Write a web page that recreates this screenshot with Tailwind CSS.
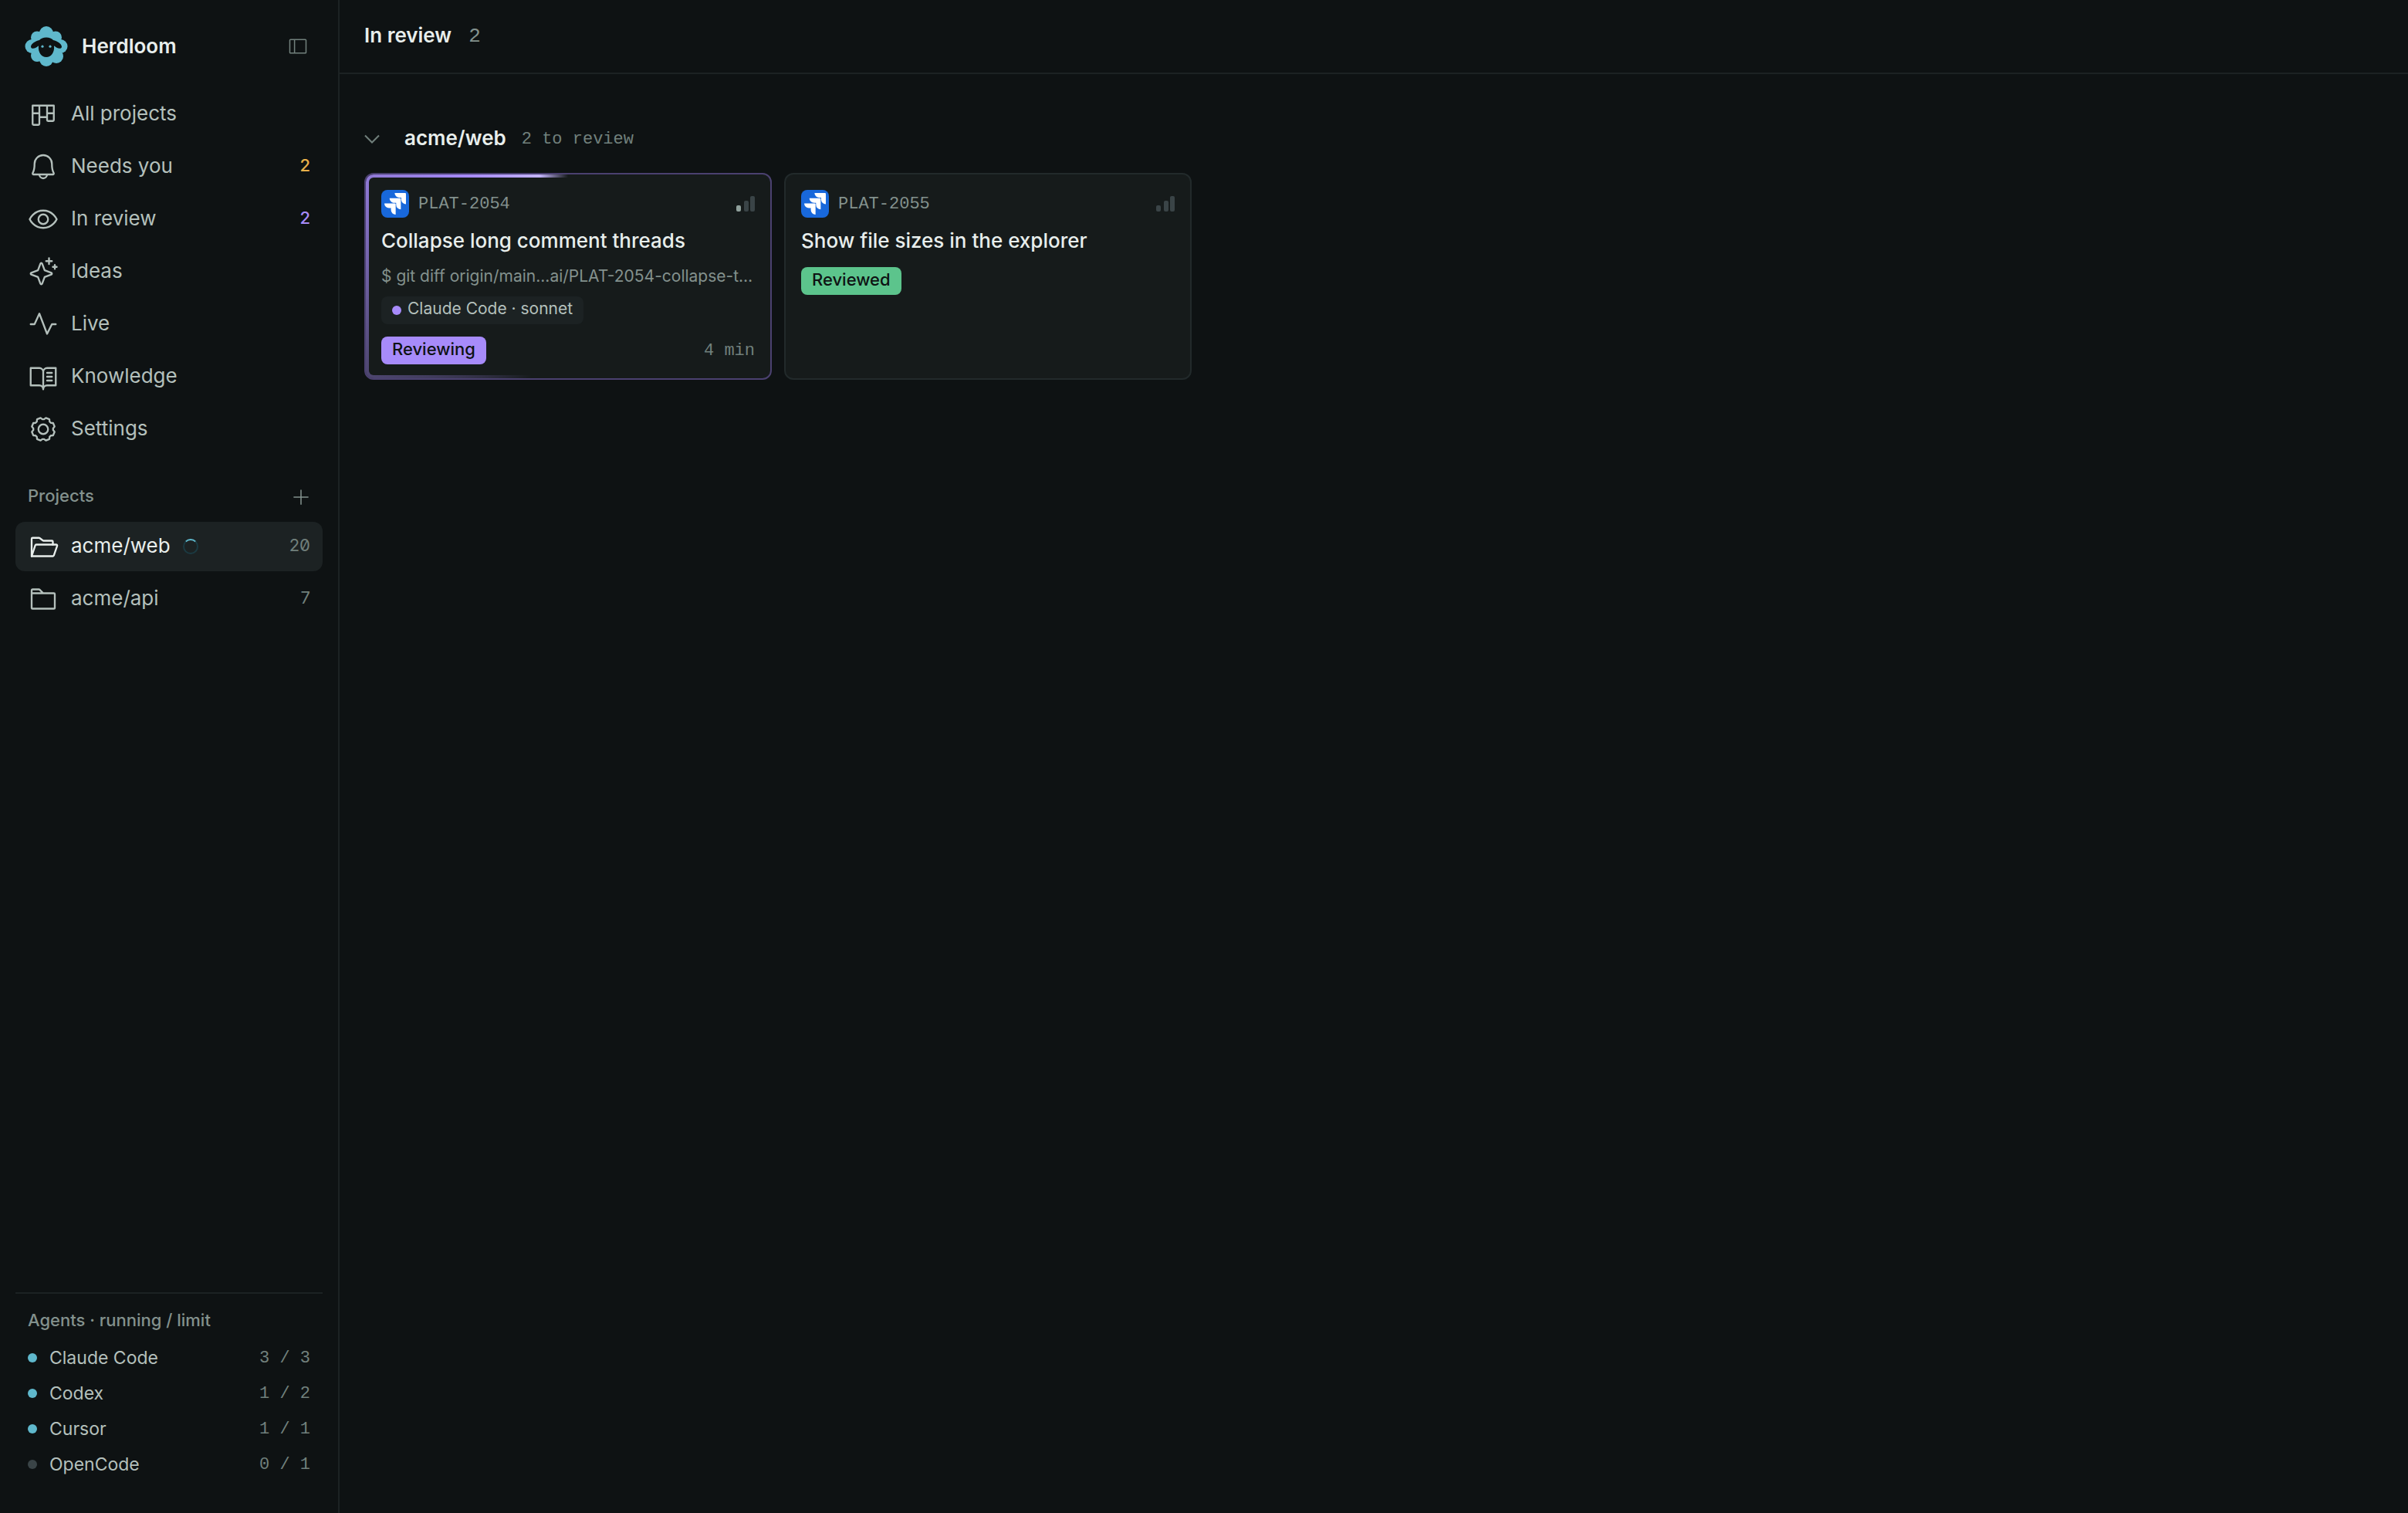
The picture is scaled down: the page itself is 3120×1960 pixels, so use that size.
<!DOCTYPE html>
<html lang="en">

<head>
    <meta charset="UTF-8">
    <meta name="viewport" content="width=device-width, initial-scale=1.0">
    <title>Herdloom</title>

    <script src="https://cdn.jsdelivr.net/npm/@tailwindcss/browser@4"></script>
</head>

<body class="flex min-h-screen bg-[#0e1213] font-['Inter',sans-serif] text-[26px] text-[#b4c0bc]">

<!-- Icon sprite -->
<svg class="hidden" xmlns="http://www.w3.org/2000/svg">
    <symbol id="kanban" viewBox="0 0 256 256">
        <path d="M40 56h176v120a8 8 0 0 1-8 8h-40a8 8 0 0 1-8-8V56M96 56v152a8 8 0 0 1-8 8H48a8 8 0 0 1-8-8V56M40 120h56M160 120h56M96 152h64"/>
    </symbol>
    <symbol id="bell" viewBox="0 0 256 256">
        <path d="M96 192a32 32 0 0 0 64 0M56 104a72 72 0 0 1 144 0c0 35.800 8.300 64.600 14.900 76a8 8 0 0 1-6.900 12H48a8 8 0 0 1-6.900-12C47.700 168.600 56 139.800 56 104Z"/>
    </symbol>
    <symbol id="eye" viewBox="0 0 256 256">
        <path d="M128 56C48 56 16 128 16 128s32 72 112 72 112-72 112-72-32-72-112-72Z"/>
        <circle cx="128" cy="128" r="40"/>
    </symbol>
    <symbol id="sparkle" viewBox="0 0 256 256">
        <path d="M84.270 171.730l-55.090-20.300a7.920 7.920 0 0 1 0-14.860l55.090-20.300 20.300-55.090a7.920 7.920 0 0 1 14.860 0l20.300 55.090 55.090 20.300a7.920 7.920 0 0 1 0 14.860l-55.090 20.300-20.300 55.090a7.920 7.920 0 0 1-14.860 0Z"/>
        <path d="M176 16v48M152 40h48M224 72v32M208 88h32"/>
    </symbol>
    <symbol id="pulse" viewBox="0 0 256 256">
        <path d="M24 128h32l40-88 64 168 40-80h32"/>
    </symbol>
    <symbol id="book" viewBox="0 0 256 256">
        <path d="M128 88a32 32 0 0 1 32-32h72v144h-72a32 32 0 0 0-32 32V88a32 32 0 0 0-32-32H24v144h72a32 32 0 0 1 32 32M160 96h40M160 128h40M160 160h40"/>
    </symbol>
    <symbol id="gear" viewBox="-128 -128 256 256">
        <circle r="40"/>
        <path d="M82 7 94 22 82 51 63 53 53 63 51 82 22 94 7 82H-7L-22 94-51 82-53 63-63 53-82 51-94 22-82 7V-7L-94-22-82-51-63-53-53-63-51-82-22-94-7-82H7L22-94 51-82 53-63 63-53 82-51 94-22 82-7Z"/>
    </symbol>
    <symbol id="folder-open" viewBox="0 0 256 256">
        <path d="M32 208V64a8 8 0 0 1 8-8h53.300a8 8 0 0 1 4.800 1.600l27.800 20.800a8 8 0 0 0 4.800 1.600H200a8 8 0 0 1 8 8v24"/>
        <path d="M32 208l30.200-90.500a8 8 0 0 1 7.600-5.500H236a8 8 0 0 1 7.600 10.500L216 202a8 8 0 0 1-8 6Z"/>
    </symbol>
    <symbol id="folder" viewBox="0 0 256 256">
        <path d="M128 80h88a8 8 0 0 1 8 8v113a7 7 0 0 1-7 7H39a7 7 0 0 1-7-7V80ZM32 80V56a8 8 0 0 1 8-8h52.700a8 8 0 0 1 5.600 2.300L128 80"/>
    </symbol>
    <symbol id="sidebar" viewBox="0 0 256 256">
        <path d="M40 48h176a8 8 0 0 1 8 8v144a8 8 0 0 1-8 8H40a8 8 0 0 1-8-8V56a8 8 0 0 1 8-8ZM88 48v160"/>
    </symbol>
    <symbol id="plus" viewBox="0 0 256 256">
        <path d="M40 128h176M128 40v176"/>
    </symbol>
    <symbol id="jira" viewBox="0 0 36 36">
        <rect width="36" height="36" rx="8" fill="#1868db"/>
        <path fill="#fff" transform="translate(4 4) scale(1.167)" d="M11.571 11.513H0a5.218 5.218 0 0 0 5.232 5.215h2.130v2.057A5.215 5.215 0 0 0 12.575 24V12.518a1.005 1.005 0 0 0-1.005-1.005zm5.723-5.756H5.736a5.215 5.215 0 0 0 5.215 5.214h2.129v2.058a5.218 5.218 0 0 0 5.215 5.214V6.758a1.001 1.001 0 0 0-1.001-1.001zM23.013 0H11.455a5.215 5.215 0 0 0 5.215 5.215h2.129v2.057A5.215 5.215 0 0 0 24 12.483V1.005A1.001 1.001 0 0 0 23.013 0Z"/>
    </symbol>
</svg>

<aside class="sticky top-0 flex h-screen w-[440px] shrink-0 flex-col border-r-2 border-[#1c2223] px-5 pb-10">
    <div class="flex h-[116px] items-center pl-3 pr-[18px] pt-1">
        <svg class="size-14" viewBox="0 0 56 56">
            <g fill="#5fb8cc">
                <circle cx="28" cy="28" r="20"/>
                <circle cx="28" cy="11" r="9"/>
                <circle cx="16" cy="16.500" r="8"/>
                <circle cx="40" cy="16.500" r="8"/>
                <circle cx="9.500" cy="28" r="9"/>
                <circle cx="46.500" cy="28" r="9"/>
                <circle cx="16" cy="40" r="8"/>
                <circle cx="41" cy="41" r="9"/>
                <circle cx="28" cy="45" r="9"/>
            </g>
            <path fill="#0e1213" d="M28 16.500c-4 0-7 1.500-9 3.500-5 1-11 5-11 8.500 0 3 4 2.500 6 1.500s3-2.500 4-2.500C17 36 22 42 28 42s11-6 10-14.500c1 0 2 1.500 4 2.500s6 1.500 6-1.500c0-3.500-6-7.500-11-8.500-2-2-5-3.500-9-3.500z"/>
            <g fill="#5fb8cc">
                <circle cx="23" cy="28.200" r="1.600"/>
                <circle cx="33" cy="28.200" r="1.600"/>
            </g>
        </svg>
        <span class="ml-[18px] flex-1 pb-0.5 font-semibold text-[#e8eeec]">Herdloom</span>
        <button type="button" aria-label="Collapse sidebar" class="text-[#71807c]">
            <svg class="size-7 fill-none stroke-current stroke-[14]"><use href="#sidebar"/></svg>
        </button>
    </div>

    <nav class="flex flex-col gap-1">
        <a href="#" class="flex h-16 items-center gap-4 rounded-xl px-4">
            <svg class="size-10 fill-none stroke-current stroke-[15] [stroke-linecap:round] [stroke-linejoin:round]"><use href="#kanban"/></svg>
            <span class="flex-1 pb-1">All projects</span>
        </a>
        <a href="#" class="flex h-16 items-center gap-4 rounded-xl px-4">
            <svg class="size-10 fill-none stroke-current stroke-[15] [stroke-linecap:round] [stroke-linejoin:round]"><use href="#bell"/></svg>
            <span class="flex-1 pb-1">Needs you</span>
            <span class="pb-1 text-[22px] font-medium text-[#e8b04a]">2</span>
        </a>
        <a href="#" class="flex h-16 items-center gap-4 rounded-xl px-4">
            <svg class="size-10 fill-none stroke-current stroke-[15] [stroke-linecap:round] [stroke-linejoin:round]"><use href="#eye"/></svg>
            <span class="flex-1 pb-1">In review</span>
            <span class="pb-1 text-[22px] font-medium text-[#a78bfa]">2</span>
        </a>
        <a href="#" class="flex h-16 items-center gap-4 rounded-xl px-4">
            <svg class="size-10 fill-none stroke-current stroke-[15] [stroke-linecap:round] [stroke-linejoin:round]"><use href="#sparkle"/></svg>
            <span class="flex-1 pb-1">Ideas</span>
        </a>
        <a href="#" class="flex h-16 items-center gap-4 rounded-xl px-4">
            <svg class="size-10 fill-none stroke-current stroke-[15] [stroke-linecap:round] [stroke-linejoin:round]"><use href="#pulse"/></svg>
            <span class="flex-1 pb-1">Live</span>
        </a>
        <a href="#" class="flex h-16 items-center gap-4 rounded-xl px-4">
            <svg class="size-10 fill-none stroke-current stroke-[15] [stroke-linecap:round] [stroke-linejoin:round]"><use href="#book"/></svg>
            <span class="flex-1 pb-1">Knowledge</span>
        </a>
        <a href="#" class="flex h-16 items-center gap-4 rounded-xl px-4">
            <svg class="size-10 fill-none stroke-current stroke-[15] [stroke-linecap:round] [stroke-linejoin:round]"><use href="#gear"/></svg>
            <span class="flex-1 pb-1">Settings</span>
        </a>
    </nav>

    <div class="mt-6 flex h-16 items-center justify-between pl-4 pr-3.5">
        <h2 class="pb-1 text-[22px] font-medium text-[#83918d]">Projects</h2>
        <button type="button" aria-label="Add project" class="text-[#83918d]">
            <svg class="size-7 fill-none stroke-current stroke-[14]"><use href="#plus"/></svg>
        </button>
    </div>

    <nav class="flex flex-col gap-1">
        <a href="#" class="flex h-16 items-center gap-4 rounded-xl bg-[#1c2223] px-4 text-[#e8eeec]">
            <svg class="size-10 fill-none stroke-current stroke-[15] [stroke-linecap:round] [stroke-linejoin:round]"><use href="#folder-open"/></svg>
            <span class="pb-1">acme/web</span>
            <span class="size-5 rounded-full border-2 border-[#1b3a42] border-t-[#5fb8cc]"></span>
            <span class="flex-1 pb-1 text-right text-[22px] slashed-zero text-[#71807c]">20</span>
        </a>
        <a href="#" class="flex h-16 items-center gap-4 rounded-xl px-4">
            <svg class="size-10 fill-none stroke-current stroke-[15] [stroke-linecap:round] [stroke-linejoin:round]"><use href="#folder"/></svg>
            <span class="pb-1">acme/api</span>
            <span class="flex-1 pb-1 text-right text-[22px] slashed-zero text-[#71807c]">7</span>
        </a>
    </nav>

    <div class="mt-auto border-t-2 border-[#1c2223]">
        <h2 class="flex h-15 items-center px-4 pt-2 text-[22px] font-medium text-[#83918d]">Agents · running / limit</h2>
        <ul class="px-4 text-[23px]">
            <li class="flex h-[46px] items-center gap-4">
                <span class="size-3 rounded-full bg-[#5fb8cc]"></span>
                <span class="flex-1">Claude Code</span>
                <span class="font-['Liberation_Mono',monospace] text-[22px] text-[#71807c]">3 / 3</span>
            </li>
            <li class="flex h-[46px] items-center gap-4">
                <span class="size-3 rounded-full bg-[#5fb8cc]"></span>
                <span class="flex-1">Codex</span>
                <span class="font-['Liberation_Mono',monospace] text-[22px] text-[#71807c]">1 / 2</span>
            </li>
            <li class="flex h-[46px] items-center gap-4">
                <span class="size-3 rounded-full bg-[#5fb8cc]"></span>
                <span class="flex-1">Cursor</span>
                <span class="font-['Liberation_Mono',monospace] text-[22px] text-[#71807c]">1 / 1</span>
            </li>
            <li class="flex h-[46px] items-center gap-4">
                <span class="size-3 rounded-full bg-[#3a4447]"></span>
                <span class="flex-1">OpenCode</span>
                <span class="font-['Liberation_Mono',monospace] text-[22px] text-[#71807c]">0 / 1</span>
            </li>
        </ul>
    </div>
</aside>

<main class="min-w-0 flex-1">
    <header class="flex h-24 items-center gap-[22px] border-b-2 border-[#1c2223] px-8">
        <h1 class="pb-1 font-semibold text-[#e8eeec]">In review</h1>
        <span class="font-['Liberation_Mono',monospace] text-[#83918d]">2</span>
    </header>

    <section class="px-8 pt-14">
        <div class="flex h-14 items-center">
            <button type="button" aria-label="Collapse acme/web" class="mr-8 text-[#71807c]">
                <svg class="h-3 w-5 fill-none stroke-current stroke-2" viewBox="0 0 20 12"><path d="M1 1.500l9 9 9-9"/></svg>
            </button>
            <h2 class="mr-5 pb-1 font-semibold text-[#e8eeec]">acme/web</h2>
            <span class="font-['Liberation_Mono',monospace] text-[22px] text-[#71807c]">2 to review</span>
        </div>

        <div class="mt-4 flex flex-wrap gap-4">
            <article class="relative w-[528px] rounded-xl border-2 border-[#4b4170] bg-[#161b1b]">
                <!-- Running glow -->
                <div class="absolute inset-0 rounded-[10px] bg-[conic-gradient(transparent_200deg,#a78bfa_315deg,#c4b5fd_344deg,transparent_360deg)]"></div>
                <div class="absolute inset-1 rounded-md bg-[#161b1b]"></div>

                <div class="relative px-5 pb-[18px] pt-5">
                    <div class="flex h-9 items-center gap-3">
                        <svg class="size-9"><use href="#jira"/></svg>
                        <span class="flex-1 font-['Liberation_Mono',monospace] text-[22px] text-[#83918d]">PLAT-2054</span>
                        <svg class="h-5 w-6 fill-[#3a4447]" viewBox="0 0 24 20">
                            <rect y="12" width="6" height="8" rx="2" fill="#8fa09b"/>
                            <rect x="10" y="6" width="6" height="14" rx="2"/>
                            <rect x="18" width="6" height="20" rx="2"/>
                        </svg>
                    </div>
                    <h3 class="mt-3 font-medium leading-9 text-[#e8eeec]">Collapse long comment threads</h3>
                    <p class="mt-3.5 truncate text-[21px] leading-7 text-[#83918d]">$ git diff origin/main...ai/PLAT-2054-collapse-t…</p>
                    <div class="mt-3 flex h-9 w-fit items-center gap-2 rounded-lg bg-[#1c2223] px-3.5 text-[21px]">
                        <span class="size-3 rounded-full bg-[#a78bfa]"></span>
                        <span class="pb-1">Claude Code · sonnet</span>
                    </div>
                    <div class="mt-4 flex items-center justify-between">
                        <span class="flex h-9 items-center rounded-lg bg-[#a78bfa] px-3.5 pb-1 text-[22px] font-medium text-[#0e1213]">Reviewing</span>
                        <span class="font-['Liberation_Mono',monospace] text-[22px] text-[#71807c]">4 min</span>
                    </div>
                </div>
            </article>

            <article class="w-[528px] rounded-xl border-2 border-[#222a2b] bg-[#161b1b] px-5 pb-[18px] pt-5">
                <div class="flex h-9 items-center gap-3">
                    <svg class="size-9"><use href="#jira"/></svg>
                    <span class="flex-1 font-['Liberation_Mono',monospace] text-[22px] text-[#83918d]">PLAT-2055</span>
                    <svg class="h-5 w-6 fill-[#3a4447]" viewBox="0 0 24 20">
                        <rect y="12" width="6" height="8" rx="2"/>
                        <rect x="10" y="6" width="6" height="14" rx="2"/>
                        <rect x="18" width="6" height="20" rx="2"/>
                    </svg>
                </div>
                <h3 class="mt-3 font-medium leading-9 text-[#e8eeec]">Show file sizes in the explorer</h3>
                <span class="mt-4 flex h-9 w-fit items-center rounded-lg bg-[#5cc48c] px-3.5 pb-1 text-[22px] font-medium text-[#0e1213]">Reviewed</span>
            </article>
        </div>
    </section>
</main>
</body>

</html>
